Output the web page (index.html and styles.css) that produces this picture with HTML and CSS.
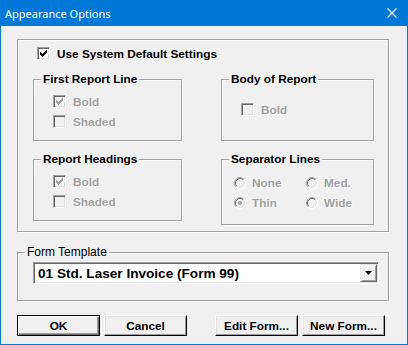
FILE: index.html
```html
<!DOCTYPE html>
<html lang="en">

<head>
    <meta charset="UTF-8">
    <title>Appearance Options</title>
    <link rel="stylesheet" href="styles.css">
</head>

<body>

    <div class="window">
        <div class="titlebar">
            <span class="title">Appearance Options</span>
            <svg class="close" width="10" height="10" viewBox="0 0 10 10">
                <path d="M0.5 0.5L9.5 9.5M9.5 0.5L0.5 9.5" stroke="#fff" stroke-width="1.1" fill="none" />
            </svg>
        </div>

        <div class="content">
            <div class="group outer">
                <div class="check-row main">
                    <span class="box"><svg class="tick" width="7" height="7" viewBox="0 0 7 7"><path d="M0 2h1v3h-1zM1 3h1v3h-1zM2 4h1v3h-1zM3 3h1v3h-1zM4 2h1v3h-1zM5 1h1v3h-1zM6 0h1v3h-1z" fill="#000" /></svg></span>
                    <span class="label">Use System Default Settings</span>
                </div>

                <div class="groups">
                    <div class="group sub">
                        <span class="legend">First Report Line</span>
                        <div class="check-row off">
                            <span class="box"><svg class="tick" width="7" height="7" viewBox="0 0 7 7"><path d="M0 2h1v3h-1zM1 3h1v3h-1zM2 4h1v3h-1zM3 3h1v3h-1zM4 2h1v3h-1zM5 1h1v3h-1zM6 0h1v3h-1z" fill="#a0a0a0" /></svg></span>
                            <span class="label">Bold</span>
                        </div>
                        <div class="check-row off">
                            <span class="box"></span>
                            <span class="label">Shaded</span>
                        </div>
                    </div>

                    <div class="group sub body-report">
                        <span class="legend">Body of Report</span>
                        <div class="check-row off">
                            <span class="box"></span>
                            <span class="label">Bold</span>
                        </div>
                    </div>

                    <div class="group sub">
                        <span class="legend">Report Headings</span>
                        <div class="check-row off">
                            <span class="box"><svg class="tick" width="7" height="7" viewBox="0 0 7 7"><path d="M0 2h1v3h-1zM1 3h1v3h-1zM2 4h1v3h-1zM3 3h1v3h-1zM4 2h1v3h-1zM5 1h1v3h-1zM6 0h1v3h-1z" fill="#a0a0a0" /></svg></span>
                            <span class="label">Bold</span>
                        </div>
                        <div class="check-row off">
                            <span class="box"></span>
                            <span class="label">Shaded</span>
                        </div>
                    </div>

                    <div class="group sub separator">
                        <span class="legend">Separator Lines</span>
                        <div class="radios">
                            <div class="radio-row off">
                                <svg class="radio" width="12" height="12" viewBox="0 0 12 12">
                                    <circle cx="6" cy="6" r="4" fill="#f0f0f0" />
                                    <path d="M2.11 9.89A5.5 5.5 0 0 1 9.89 2.11" stroke="#a0a0a0" fill="none" />
                                    <path d="M9.89 2.11A5.5 5.5 0 0 1 2.11 9.89" stroke="#fff" fill="none" />
                                    <path d="M2.82 9.18A4.5 4.5 0 0 1 9.18 2.82" stroke="#696969" fill="none" />
                                    <path d="M9.18 2.82A4.5 4.5 0 0 1 2.82 9.18" stroke="#e3e3e3" fill="none" />
                                </svg>
                                <span class="label">None</span>
                            </div>
                            <div class="radio-row off">
                                <svg class="radio" width="12" height="12" viewBox="0 0 12 12">
                                    <circle cx="6" cy="6" r="4" fill="#f0f0f0" />
                                    <path d="M2.11 9.89A5.5 5.5 0 0 1 9.89 2.11" stroke="#a0a0a0" fill="none" />
                                    <path d="M9.89 2.11A5.5 5.5 0 0 1 2.11 9.89" stroke="#fff" fill="none" />
                                    <path d="M2.82 9.18A4.5 4.5 0 0 1 9.18 2.82" stroke="#696969" fill="none" />
                                    <path d="M9.18 2.82A4.5 4.5 0 0 1 2.82 9.18" stroke="#e3e3e3" fill="none" />
                                </svg>
                                <span class="label">Med.</span>
                            </div>
                            <div class="radio-row off">
                                <svg class="radio" width="12" height="12" viewBox="0 0 12 12">
                                    <circle cx="6" cy="6" r="4" fill="#f0f0f0" />
                                    <path d="M2.11 9.89A5.5 5.5 0 0 1 9.89 2.11" stroke="#a0a0a0" fill="none" />
                                    <path d="M9.89 2.11A5.5 5.5 0 0 1 2.11 9.89" stroke="#fff" fill="none" />
                                    <path d="M2.82 9.18A4.5 4.5 0 0 1 9.18 2.82" stroke="#696969" fill="none" />
                                    <path d="M9.18 2.82A4.5 4.5 0 0 1 2.82 9.18" stroke="#e3e3e3" fill="none" />
                                    <circle cx="6" cy="6" r="2" fill="#a0a0a0" />
                                </svg>
                                <span class="label">Thin</span>
                            </div>
                            <div class="radio-row off">
                                <svg class="radio" width="12" height="12" viewBox="0 0 12 12">
                                    <circle cx="6" cy="6" r="4" fill="#f0f0f0" />
                                    <path d="M2.11 9.89A5.5 5.5 0 0 1 9.89 2.11" stroke="#a0a0a0" fill="none" />
                                    <path d="M9.89 2.11A5.5 5.5 0 0 1 2.11 9.89" stroke="#fff" fill="none" />
                                    <path d="M2.82 9.18A4.5 4.5 0 0 1 9.18 2.82" stroke="#696969" fill="none" />
                                    <path d="M9.18 2.82A4.5 4.5 0 0 1 2.82 9.18" stroke="#e3e3e3" fill="none" />
                                </svg>
                                <span class="label">Wide</span>
                            </div>
                        </div>
                    </div>
                </div>
            </div>

            <div class="group template">
                <span class="legend plain">Form Template</span>
                <div class="combo">
                    <span class="combo-text">01 Std. Laser Invoice (Form 99)</span>
                    <span class="combo-btn">
                        <svg width="7" height="4" viewBox="0 0 7 4"><path d="M0 0h7l-3.5 4z" fill="#000" /></svg>
                    </span>
                </div>
            </div>

            <div class="buttons">
                <button class="btn default">OK</button>
                <button class="btn">Cancel</button>
                <button class="btn spaced">Edit Form...</button>
                <button class="btn">New Form...</button>
            </div>
        </div>
    </div>

</body>

</html>
```

FILE: styles.css
```css
body {
    margin: 0;
    font-family: "Liberation Sans", Arial, sans-serif;
    background-color: #f0f0f0;
}

.window {
    width: 408px;
    height: 345px;
    box-sizing: border-box;
    border: 1px solid #0078d7;
    border-top: none;
    background-color: #f0f0f0;
}

/* barra de titulo */
.titlebar {
    height: 26px;
    margin: 0 -1px;
    background-color: #0078d7;
    display: flex;
    align-items: center;
    justify-content: space-between;
    padding: 0 11px 0 5px;
}

.title {
    color: #fff;
    font-family: "Noto Sans", sans-serif;
    font-size: 11px;
}

.close {
    display: block;
}

.content {
    padding: 13px 18px 0 16px;
}

/* caixas de grupo */
.group {
    position: relative;
    border: 1px solid #a0a0a0;
    box-shadow: 1px 1px 0 #fff, inset 1px 1px 0 #fff;
}

.legend {
    position: absolute;
    top: -8px;
    left: 7px;
    padding: 0 2px;
    background-color: #f0f0f0;
    font-size: 11.8px;
    font-weight: bold;
    line-height: 14px;
    color: #000;
}

.legend.plain {
    font-weight: normal;
    font-size: 12px;
}

.outer {
    height: 193px;
    box-sizing: border-box;
    padding: 7px 0 0 15px;
}

.groups {
    display: grid;
    grid-template-columns: 149px 153px;
    column-gap: 39px;
    row-gap: 18px;
    align-items: start;
    margin-top: 19px;
}

.sub {
    height: 62px;
    box-sizing: border-box;
    padding: 15px 0 0 19px;
    display: flex;
    flex-direction: column;
    gap: 7px;
}

.body-report {
    padding-top: 23px;
}

.separator {
    height: 66px;
    padding: 16px 0 0 12px;
}

/* checkbox */
.check-row,
.radio-row {
    display: flex;
    align-items: center;
    height: 13px;
    font-size: 11.8px;
    font-weight: bold;
}

.check-row.main {
    margin-left: 4px;
}

.box {
    width: 13px;
    height: 13px;
    box-sizing: border-box;
    border: 1px solid;
    border-color: #a0a0a0 #fff #fff #a0a0a0;
    box-shadow: inset 1px 1px 0 #696969, inset -1px -1px 0 #e3e3e3;
    background-color: #fff;
    padding: 2px 0 0 2px;
    margin-right: 7px;
    flex-shrink: 0;
}

.tick {
    display: block;
}

.off .box {
    background-color: #f0f0f0;
}

.off .label {
    color: #a0a0a0;
    text-shadow: 1px 1px 0 #fff;
}

/* radios */
.radios {
    display: grid;
    grid-template-columns: 72px auto;
    row-gap: 7px;
}

.radio {
    display: block;
    margin-right: 6px;
    flex-shrink: 0;
}

/* form template */
.template {
    margin-top: 20px;
    height: 49px;
    box-sizing: border-box;
    padding: 9px 0 0 15px;
}

.combo {
    width: 346px;
    height: 22px;
    box-sizing: border-box;
    border: 1px solid;
    border-color: #a0a0a0 #fff #fff #a0a0a0;
    box-shadow: inset 1px 1px 0 #696969, inset -1px -1px 0 #e3e3e3;
    background-color: #fff;
    display: flex;
    align-items: center;
    justify-content: space-between;
    padding: 1px 1px 1px 4px;
}

.combo-text {
    font-size: 13.6px;
    font-weight: bold;
}

.combo-btn {
    width: 17px;
    height: 18px;
    box-sizing: border-box;
    background-color: #f0f0f0;
    border: 1px solid;
    border-color: #e3e3e3 #696969 #696969 #e3e3e3;
    box-shadow: inset 1px 1px 0 #fff, inset -1px -1px 0 #a0a0a0;
    display: flex;
    align-items: center;
    justify-content: center;
}

.combo-btn svg {
    display: block;
}

/* botoes */
.buttons {
    display: flex;
    margin-top: 14px;
}

.btn {
    width: 84px;
    height: 21px;
    margin-right: 4px;
    padding: 0;
    font-family: "Liberation Sans", Arial, sans-serif;
    font-size: 11.8px;
    font-weight: bold;
    color: #000;
    background-color: #f0f0f0;
    border: 1px solid;
    border-color: #fff #000 #000 #fff;
    box-shadow: inset -1px -1px 0 #a0a0a0, inset 1px 1px 0 #e3e3e3;
}

.btn.default {
    border-color: #000;
    box-shadow: inset 1px 1px 0 #fff, inset -1px -1px 0 #696969, inset -2px -2px 0 #a0a0a0;
}

.btn.spaced {
    margin-left: 24px;
}
```
